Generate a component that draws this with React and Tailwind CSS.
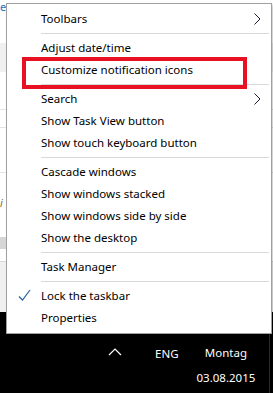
import React from 'react';

const font = { fontFamily: '"Noto Sans", "Open Sans", sans-serif' };

function Chevron() {
  return (
    <svg width="7" height="12" viewBox="0 0 7 12" className="shrink-0">
      <path d="M0.5 0.5 L6 6 L0.5 11.5" fill="none" stroke="#1b1b3a" strokeWidth="1" />
    </svg>
  );
}

function Row({ label, arrow, checked }) {
  return (
    <div className="relative flex h-[22px] items-center justify-between pl-[34px] pr-[10px]">
      {checked && (
        <svg width="13" height="12" viewBox="0 0 13 12" className="absolute left-[11px] top-[4px]">
          <path d="M1 7.5 L4.5 11 L12 1" fill="none" stroke="#2a5e9c" strokeWidth="1.2" />
        </svg>
      )}
      <span className="text-[11.5px] leading-none text-black">{label}</span>
      {arrow && <Chevron />}
    </div>
  );
}

function Sep() {
  return (
    <div className="flex h-[7px] items-center pl-[34px] pr-[2px]">
      <div className="h-px w-full bg-[#d9d9d9]" />
    </div>
  );
}

export default function App() {
  return (
    <div className="relative h-[393px] w-[273px] overflow-hidden bg-white" style={font}>
      {/* window behind the menu */}
      <div className="flex h-[312px] flex-col">
        <div className="h-[43px] pt-[1px] text-[11px] leading-none text-[#1e6fc2]">
          <span>e</span>
        </div>
        <div className="h-[29px] bg-[#f0f0f0]" />
        <div className="h-[38px] border-b border-[#e3e3e3]" />
        <div className="h-[18px] border-b border-[#e3e3e3]" />
        <div className="h-[45px] border-b border-[#e3e3e3]" />
        <div className="h-[26px] pt-[24px] text-[11px] italic leading-none text-[#8a6a3a]">
          <span>i</span>
        </div>
        <div className="h-[38px]" />
        <div className="h-[12px] w-[6px] bg-[#d6d6d6]" />
        <div className="h-[13px] border-b border-[#d9d9d9]" />
        <div className="flex-1 bg-[#f0f0f0]" />
      </div>

      {/* taskbar */}
      <div className="relative flex h-[81px] bg-black text-[11.5px] leading-none text-white">
        <div className="flex pl-[108px] pt-[35px]">
          <svg width="14" height="8" viewBox="0 0 14 8" className="mt-[1px]">
            <path d="M1 7 L7 1 L13 7" fill="none" stroke="#fff" strokeWidth="1.2" />
          </svg>
        </div>
        <div className="pl-[33px] pt-[36px]">ENG</div>
        <div className="flex flex-col items-center gap-[13px] pl-[18px] pt-[35px]">
          <span>Montag</span>
          <span>03.08.2015</span>
        </div>
        <div className="ml-auto mr-[3px] w-px bg-[#2a2a2a]" />
      </div>

      {/* context menu */}
      <div className="absolute left-[6px] top-[3px] w-[266px] border border-[#a0a0a0] bg-white pb-[4px] pt-[4px] shadow-[2px_2px_3px_rgba(0,0,0,0.2)]">
        <Row label="Toolbars" arrow />
        <Sep />
        <Row label="Adjust date/time" />
        <Row label="Customize notification icons" />
        <Sep />
        <Row label="Search" arrow />
        <Row label="Show Task View button" />
        <Row label="Show touch keyboard button" />
        <Sep />
        <Row label="Cascade windows" />
        <Row label="Show windows stacked" />
        <Row label="Show windows side by side" />
        <Row label="Show the desktop" />
        <Sep />
        <Row label="Task Manager" />
        <Sep />
        <Row label="Lock the taskbar" checked />
        <Row label="Properties" />

        <div className="absolute left-[15px] top-[53px] h-[32px] w-[225px] border-4 border-[#e81123]" />
      </div>
    </div>
  );
}
